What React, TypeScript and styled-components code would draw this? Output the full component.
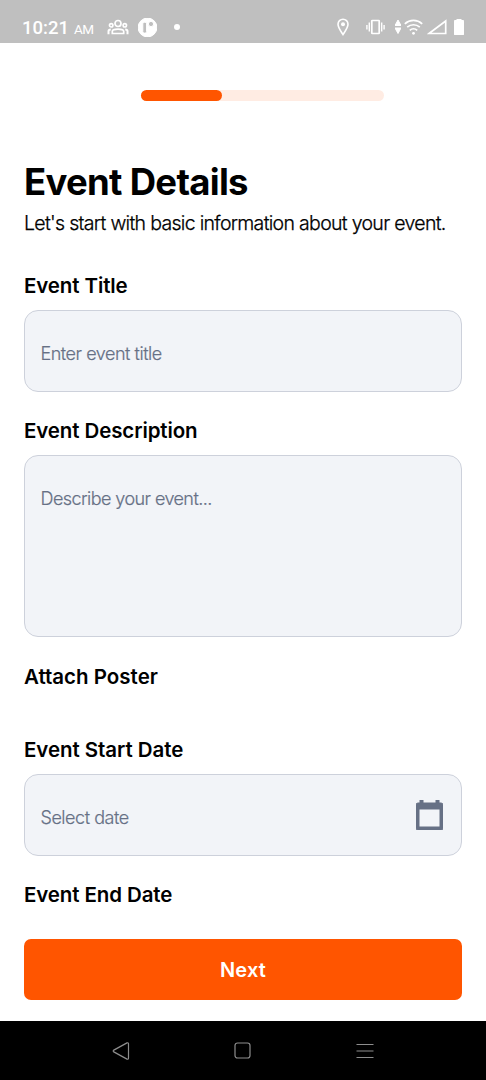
import React from "react";
import styled, { createGlobalStyle } from "styled-components";

const GlobalStyle = createGlobalStyle`
  *, *::before, *::after { box-sizing: border-box; }
  body { margin: 0; background: #fff; }
`;

const Screen = styled.div`
  display: flex;
  flex-direction: column;
  width: 486px;
  height: 1080px;
  overflow: hidden;
  background: #fff;
  color: #000;
  font-family: Inter, "Liberation Sans", sans-serif;
`;

const StatusBar = styled.header`
  display: flex;
  justify-content: space-between;
  flex: 0 0 43px;
  padding: 11px 22px 0 22px;
  background: #bfbfbf;
  color: #fff;
`;

const StatusGroup = styled.div`
  display: flex;
  align-items: center;
  height: 32px;
`;

const Clock = styled.div`
  width: 85px;
  padding-top: 2px;
  font-family: Roboto, sans-serif;
  font-size: 18.5px;
  font-weight: 500;
  line-height: 32px;
  letter-spacing: 0;
  white-space: nowrap;
`;

const Meridiem = styled.span`
  margin-left: 5px;
  font-size: 13.5px;
  font-weight: 400;
  letter-spacing: -0.5px;
`;

const Glyph = styled.svg<{ $gap?: number }>`
  display: block;
  flex: none;
  margin-left: ${({ $gap = 0 }) => $gap}px;
  fill: none;
  stroke: currentColor;
`;

const Content = styled.main`
  display: flex;
  flex-direction: column;
  flex: 1 1 0;
  min-height: 0;
  overflow: hidden;
  padding: 47px 24px 0;
`;

const ProgressTrack = styled.div`
  flex: none;
  width: 243px;
  height: 11px;
  margin-left: 117px;
  border-radius: 6px;
  background: #ffece3;
`;

const ProgressFill = styled.div<{ $width: number }>`
  width: ${({ $width }) => $width}px;
  height: 100%;
  border-radius: 6px;
  background: #ff5500;
`;

const Title = styled.h1`
  margin: 59px 0 0;
  font-size: 36.5px;
  font-weight: 700;
  line-height: 44px;
  letter-spacing: -0.7px;
`;

const Subtitle = styled.p`
  margin: 7px 0 39px;
  font-size: 19.5px;
  font-weight: 300;
  line-height: 24px;
  letter-spacing: -0.69px;
  -webkit-text-stroke: 0.25px currentColor;
  white-space: nowrap;
`;

const FieldGroup = styled.section<{ $gap?: number }>`
  display: flex;
  flex-direction: column;
  flex: none;
  gap: 12px;
  margin-bottom: ${({ $gap = 27 }) => $gap}px;
`;

const Label = styled.h2<{ $tracking?: number }>`
  margin: 0;
  font-size: 20.5px;
  font-weight: 600;
  line-height: 24px;
  letter-spacing: ${({ $tracking = -0.11 }) => $tracking}px;
`;

const Field = styled.div<{ $height?: number }>`
  display: flex;
  justify-content: space-between;
  height: ${({ $height = 82 }) => $height}px;
  padding: 25px 18px 0 15.5px;
  border: 1px solid #cdd1db;
  border-radius: 14px;
  background: #f2f4f8;
  color: #667085;
`;

const Placeholder = styled.span<{ $tracking?: number }>`
  margin-top: 6px;
  font-size: 18px;
  font-weight: 300;
  line-height: 24px;
  letter-spacing: ${({ $tracking = -0.47 }) => $tracking}px;
  -webkit-text-stroke: 0.2px currentColor;
`;

const Footer = styled.footer`
  display: flex;
  flex: 0 0 82px;
  padding: 0 24px 21px;
`;

const NextButton = styled.button`
  flex: 1;
  padding: 0;
  border: 0;
  border-radius: 7px;
  background: #ff5500;
  color: #fff;
  font-family: inherit;
  font-size: 20px;
  font-weight: 600;
  line-height: 24px;
  letter-spacing: 0.15px;
`;

const NavBar = styled.nav`
  display: flex;
  align-items: center;
  justify-content: center;
  gap: 104.5px;
  flex: 0 0 59px;
  padding-right: 1px;
  background: #000;
  color: #8d8d8d;
`;

const GroupIcon = () => (
  <Glyph width="22" height="17" viewBox="0 0 22 17" strokeWidth="1.7">
    <circle cx="11" cy="4.5" r="3" />
    <circle cx="4.2" cy="6.3" r="1.7" />
    <circle cx="17.8" cy="6.3" r="1.7" />
    <path d="M5.3 14.5v-2c0-3.2 11.4-3.2 11.4 0v2z" />
    <path d="M1.5 15.3v-3c0-1 .8-1.8 2.3-1.8M20.5 15.3v-3c0-1-.8-1.8-2.3-1.8" strokeWidth="2" />
  </Glyph>
);

const AppIcon = () => (
  <Glyph $gap={9} width="19" height="19" viewBox="0 0 19 19" stroke="none">
    <circle cx="9.5" cy="9.5" r="9.4" fill="#fff" />
    <rect x="4.8" y="4.3" width="3.8" height="10.8" rx="1.5" fill="#bfbfbf" />
    <circle cx="13" cy="6" r="2.6" fill="#bfbfbf" />
  </Glyph>
);

const NotificationDot = styled.i`
  width: 6px;
  height: 6px;
  margin-left: 17px;
  border-radius: 50%;
  background: currentColor;
`;

const PinIcon = () => (
  <Glyph width="12" height="18" viewBox="0 0 12 18" strokeWidth="1.6">
    <path d="M6 16.5C4 13.5 1 9.5 1 6.2a5 5 0 0 1 10 0C11 9.5 8 13.5 6 16.5Z" />
    <circle cx="6" cy="6.2" r="2" fill="currentColor" stroke="none" />
  </Glyph>
);

const VibrateIcon = () => (
  <Glyph $gap={17} width="19" height="16" viewBox="0 0 19 16" strokeWidth="1.7">
    <rect x="5.8" y="1.5" width="7.4" height="13" rx="0.5" />
    <path d="M3.3 3.5v9M15.7 3.5v9M.9 6v4.5M18.1 6v4.5" strokeWidth="1.4" />
  </Glyph>
);

const DataIcon = () => (
  <Glyph $gap={10} width="6" height="14" viewBox="0 0 6 14" stroke="none">
    <path d="M3 0 6 5.5H0ZM0 8H6L3 13.5Z" fill="currentColor" />
  </Glyph>
);

const WifiIcon = () => (
  <Glyph $gap={3} width="19" height="16" viewBox="0 0 19 16" strokeWidth="1.7">
    <path d="M.8 4.8c5-4.5 12.4-4.5 17.4 0M3.2 8.2c3.6-3.3 9-3.3 12.6 0M5.8 11.3c2.1-1.9 5.3-1.9 7.4 0" />
    <circle cx="9.5" cy="14.3" r="1.4" fill="currentColor" stroke="none" />
  </Glyph>
);

const SignalIcon = () => (
  <Glyph $gap={4} width="20" height="16" viewBox="0 0 20 16" strokeWidth="1.7">
    <path d="M2 14.5 18.7 2v12.5Z" />
  </Glyph>
);

const BatteryIcon = () => (
  <Glyph $gap={7} width="10" height="16" viewBox="0 0 10 16" stroke="none">
    <path d="M3 0h4v1.5h2q1 0 1 1V15q0 1-1 1H1q-1 0-1-1V2.5q0-1 1-1h2Z" fill="currentColor" />
  </Glyph>
);

const CalendarIcon = () => (
  <Glyph width="27" height="30" viewBox="0 0 27 30" stroke="none">
    <path
      fillRule="evenodd"
      fill="currentColor"
      d="M4 0h3v3h13V0h3v3h2a2 2 0 0 1 2 2v23a2 2 0 0 1-2 2H2a2 2 0 0 1-2-2V5a2 2 0 0 1 2-2h2ZM3 9v18h21V9Z"
    />
  </Glyph>
);

const BackIcon = () => (
  <Glyph width="18" height="18" viewBox="0 0 18 18" strokeWidth="1.2">
    <path d="M15 .9 1.8 8.1q-1.2.9 0 1.8L15 17.1q1.5.5 1.5-1V1.9q0-1.5-1.5-1Z" />
  </Glyph>
);

const HomeIcon = () => (
  <Glyph width="17" height="17" viewBox="0 0 17 17" strokeWidth="1.2">
    <rect x="1" y="1" width="15" height="15" rx="2.5" />
  </Glyph>
);

const RecentsIcon = () => (
  <Glyph width="18" height="16" viewBox="0 0 18 16" strokeWidth="1.2">
    <path d="M.5 1.5h17M.5 8h17M.5 14.5h17" />
  </Glyph>
);

export default function App() {
  return (
    <>
      <GlobalStyle />
      <Screen>
        <StatusBar>
          <StatusGroup>
            <Clock>
              10:21<Meridiem>AM</Meridiem>
            </Clock>
            <GroupIcon />
            <AppIcon />
            <NotificationDot />
          </StatusGroup>
          <StatusGroup>
            <PinIcon />
            <VibrateIcon />
            <DataIcon />
            <WifiIcon />
            <SignalIcon />
            <BatteryIcon />
          </StatusGroup>
        </StatusBar>
        <Content>
          <ProgressTrack>
            <ProgressFill $width={81} />
          </ProgressTrack>
          <Title>Event Details</Title>
          <Subtitle>Let's start with basic information about your event.</Subtitle>
          <FieldGroup>
            <Label>Event Title</Label>
            <Field>
              <Placeholder>Enter event title</Placeholder>
            </Field>
          </FieldGroup>
          <FieldGroup $gap={28}>
            <Label>Event Description</Label>
            <Field $height={182}>
              <Placeholder $tracking={-0.57}>Describe your event...</Placeholder>
            </Field>
          </FieldGroup>
          <FieldGroup $gap={49}>
            <Label $tracking={0}>Attach Poster</Label>
          </FieldGroup>
          <FieldGroup>
            <Label $tracking={-0.06}>Event Start Date</Label>
            <Field>
              <Placeholder>Select date</Placeholder>
              <CalendarIcon />
            </Field>
          </FieldGroup>
          <FieldGroup>
            <Label>Event End Date</Label>
          </FieldGroup>
        </Content>
        <Footer>
          <NextButton>Next</NextButton>
        </Footer>
        <NavBar>
          <BackIcon />
          <HomeIcon />
          <RecentsIcon />
        </NavBar>
      </Screen>
    </>
  );
}
